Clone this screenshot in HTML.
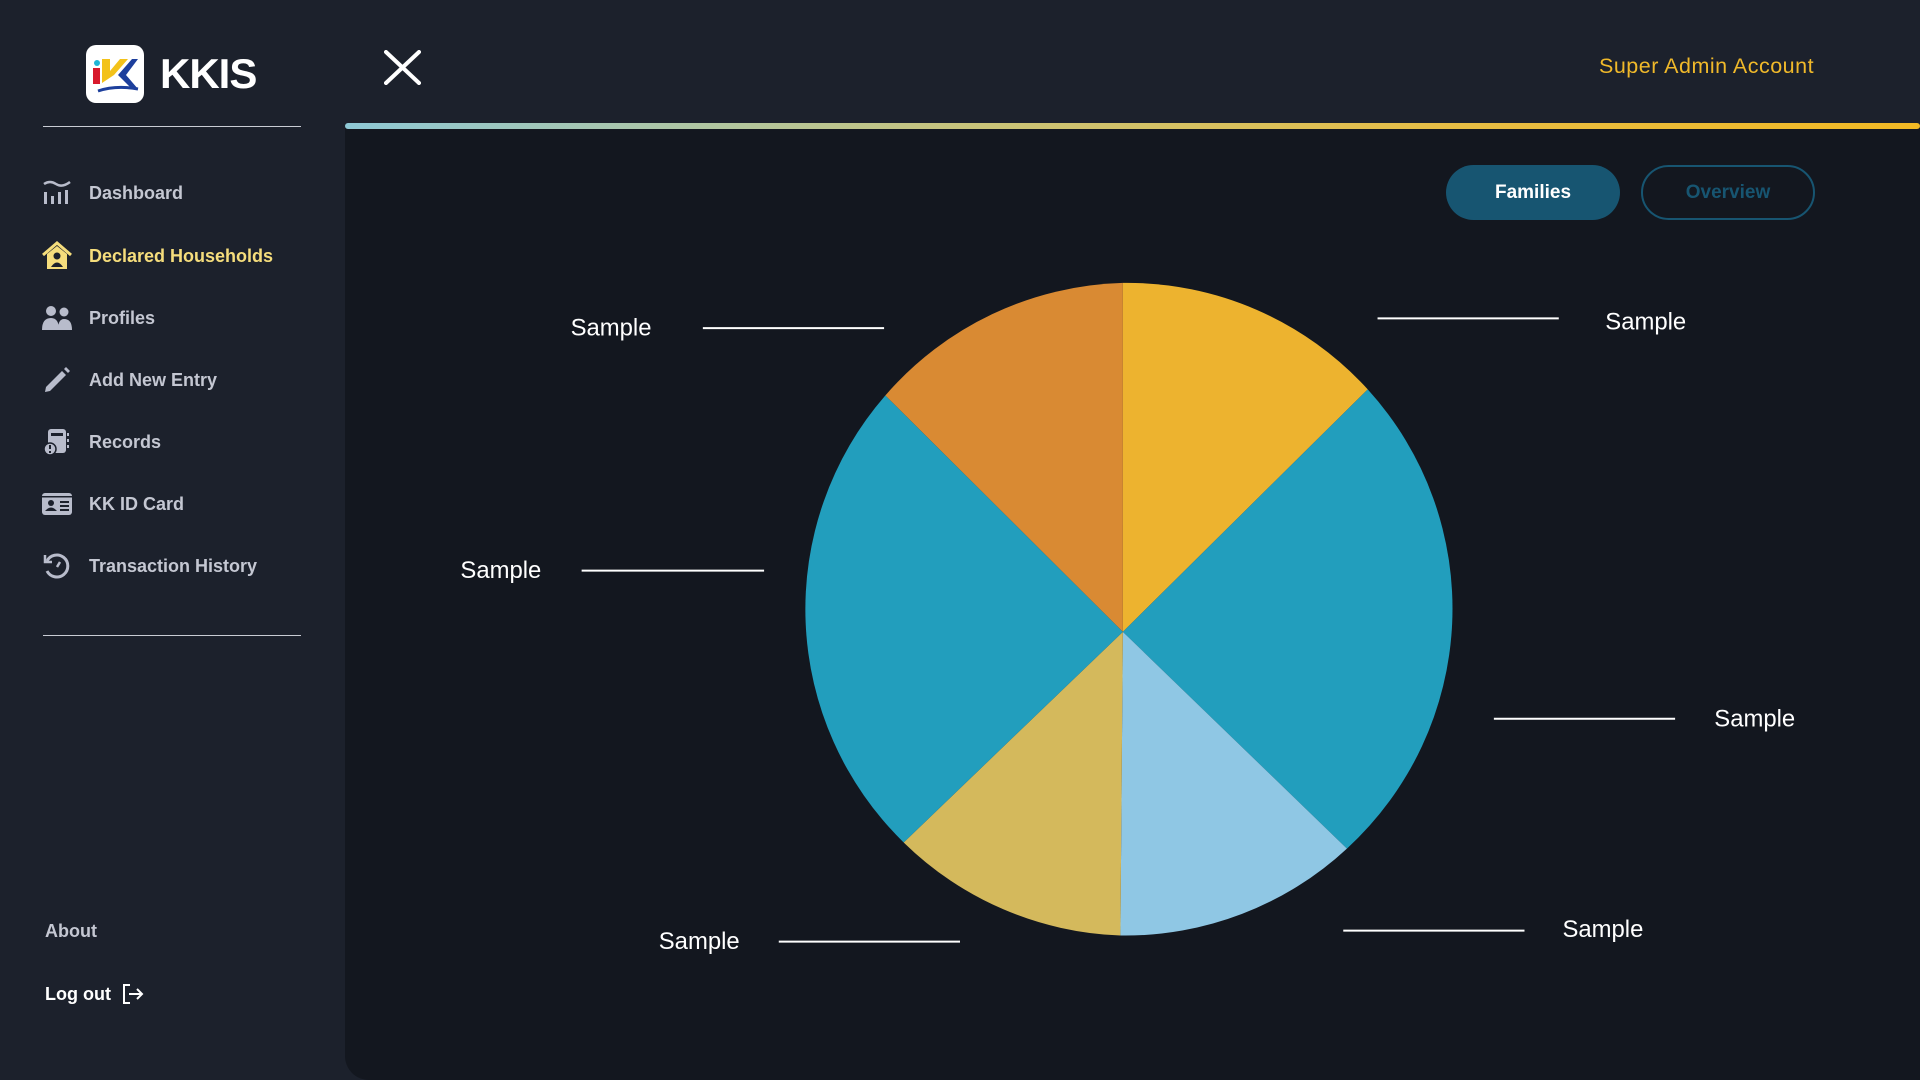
<!DOCTYPE html>
<html><head><meta charset="utf-8"><style>
*{margin:0;padding:0;box-sizing:border-box}
body{width:1920px;height:1080px;background:#1c212c;font-family:"Liberation Sans",sans-serif;position:relative;overflow:hidden}
.abs{position:absolute}
.panel{left:345px;top:124px;width:1575px;height:956px;background:#13171f;border-bottom-left-radius:24px}
.bar{left:345px;top:123px;width:1575px;height:6px;border-radius:3px;background:linear-gradient(90deg,#8ec8d6,#c9c47a 40%,#e6bd45 70%,#f2b924)}
.nav{left:42px;height:30px;display:flex;align-items:center;color:#c4c7d2;font-weight:bold;font-size:18px}
.nav svg{width:30px;height:30px;margin-right:17px}
.div{left:43px;width:258px;height:1px;background:#c9ccd4}
.btn{top:165px;height:55px;width:174px;border-radius:28px;display:flex;align-items:center;justify-content:center;font-weight:bold;font-size:19px}
</style></head><body>
<div class="abs panel"></div>
<div class="abs bar"></div>

<div class="abs" style="left:86px;top:45px;width:58px;height:58px;background:#fff;border-radius:10px">
<svg width="58" height="58" viewBox="0 0 58 58">
<circle cx="11" cy="18" r="3" fill="#1fb6d6"/>
<rect x="7" y="23" width="7" height="16" fill="#d8192c"/>
<polygon points="16,14 24,14 24,26 34,14 42,14 28,30 16,38" fill="#f3c21a"/>
<polygon points="32,30 46,14 52,14 40,30 52,44 46,44" fill="#1d3f9c"/>
<path d="M12 46 Q30 40 52 44" stroke="#1d3f9c" stroke-width="3" fill="none"/>
</svg></div>
<div class="abs" style="left:160px;top:50px;color:#fff;font-weight:bold;font-size:42px;letter-spacing:-1px">KKIS</div>
<div class="abs div" style="top:126px"></div>

<div class="abs nav" style="top:178px"><svg viewBox="0 0 30 30" fill="#b8bccb"><path d="M2 6 Q8 2 14 6 T28 4" stroke="#b8bccb" stroke-width="2.5" fill="none"/><rect x="2" y="14" width="3" height="12"/><rect x="9" y="18" width="3" height="8"/><rect x="16" y="14" width="3" height="12"/><rect x="23" y="12" width="3" height="14"/></svg>Dashboard</div>
<div class="abs nav" style="top:241px;color:#f5dd7c"><svg viewBox="0 0 30 30"><path d="M1 14 L15 2 L29 14" stroke="#f5dd7c" stroke-width="3" fill="none"/><path d="M5 13 L15 5 L25 13 V28 H5Z" fill="#f5dd7c"/><circle cx="15" cy="15" r="3.5" fill="#1c212c"/><path d="M9 26 Q15 17 21 26Z" fill="#1c212c"/></svg>Declared Households</div>
<div class="abs nav" style="top:303px"><svg viewBox="0 0 30 30" fill="#b8bccb"><circle cx="9" cy="8" r="5"/><circle cx="22" cy="9" r="4.5"/><path d="M0 27 Q0 15 9 15 Q17 15 17 27Z"/><path d="M16 27 Q16 16 22 16 Q30 16 30 27Z"/></svg>Profiles</div>
<div class="abs nav" style="top:365px"><svg viewBox="0 0 30 30" fill="#b8bccb"><path d="M4 22 L20 6 L24 10 L8 26 L3 27Z"/><path d="M22 4 L24 2 L28 6 L26 8Z"/></svg>Add New Entry</div>
<div class="abs nav" style="top:427px"><svg viewBox="0 0 30 30" fill="#b8bccb"><rect x="6" y="2" width="18" height="24" rx="3"/><rect x="9" y="6" width="12" height="3" fill="#1c212c"/><rect x="25" y="6" width="2" height="3"/><rect x="25" y="12" width="2" height="3"/><rect x="25" y="18" width="2" height="3"/><circle cx="8" cy="22" r="6" fill="#b8bccb" stroke="#1c212c" stroke-width="1.5"/><rect x="7" y="18" width="2" height="4" fill="#1c212c"/><rect x="7" y="24" width="2" height="2" fill="#1c212c"/></svg>Records</div>
<div class="abs nav" style="top:489px"><svg viewBox="0 0 30 30"><rect x="0" y="4" width="30" height="22" rx="3" fill="#b8bccb"/><rect x="0" y="7" width="30" height="1.5" fill="#1c212c"/><circle cx="9" cy="14" r="3" fill="#1c212c"/><path d="M3 22 Q9 15 15 22Z" fill="#1c212c"/><rect x="18" y="12" width="9" height="2" fill="#1c212c"/><rect x="18" y="16" width="9" height="2" fill="#1c212c"/><rect x="18" y="20" width="9" height="2" fill="#1c212c"/></svg>KK ID Card</div>
<div class="abs nav" style="top:551px"><svg viewBox="0 0 30 30" fill="none" stroke="#b8bccb" stroke-width="3"><path d="M5 10 A11 11 0 1 1 5 20"/><path d="M3 4 V11 H10" stroke-width="2.5"/><path d="M15 16 L18 11" stroke-width="2.5"/></svg>Transaction History</div>
<div class="abs div" style="top:635px"></div>

<div class="abs" style="left:45px;top:921px;color:#c4c7d2;font-weight:bold;font-size:18px">About</div>
<div class="abs" style="left:45px;top:983px;color:#fff;font-weight:bold;font-size:18px;display:flex;align-items:center">Log out<svg width="24" height="22" viewBox="0 0 24 22" style="margin-left:10px" fill="none" stroke="#fff" stroke-width="2"><path d="M9 2 H3 V20 H9"/><path d="M8 11 H21 M16 6 L21 11 L16 16"/></svg></div>

<svg class="abs" style="left:384px;top:50px" width="37" height="35" viewBox="0 0 37 35"><path d="M2 2 L35 33 M35 2 L2 33" stroke="#fff" stroke-width="4" stroke-linecap="round"/></svg>
<div class="abs" style="left:1599px;top:54px;color:#f0b92a;font-size:21.5px;letter-spacing:0.5px">Super Admin Account</div>

<div class="abs btn" style="left:1446px;background:#175571;color:#fff">Families</div>
<div class="abs btn" style="left:1641px;border:2px solid #175571;color:#175571">Overview</div>

<svg class="abs" style="left:0;top:0" width="1920" height="1080" viewBox="0 0 1568 882">
<g>
<path d="M917 516 L917 231 A266 266 0 0 0 723 323Z" fill="#d98a33"/>
<path d="M917 516 L1117 318 A266 266 0 0 0 917 231Z" fill="#edb32f"/>
<path d="M917 516 L1100 693 A266 266 0 0 0 1117 318Z" fill="#229ebd"/>
<path d="M917 516 L915 764 A266 266 0 0 0 1100 693Z" fill="#8fc7e4"/>
<path d="M917 516 L738 688 A266 266 0 0 0 915 764Z" fill="#d4b95c"/>
<path d="M917 516 L723 323 A266 266 0 0 0 738 688Z" fill="#229ebd"/>
</g>
<g stroke="#fff" stroke-width="1.6">
<line x1="574" y1="268" x2="722" y2="268"/>
<line x1="1125" y1="260" x2="1273" y2="260"/>
<line x1="475" y1="466" x2="624" y2="466"/>
<line x1="1220" y1="587" x2="1368" y2="587"/>
<line x1="1097" y1="760" x2="1245" y2="760"/>
<line x1="636" y1="769" x2="784" y2="769"/>
</g>
<g fill="#fff" font-family="Liberation Sans, sans-serif" font-size="19.5" dominant-baseline="middle">
<text x="466" y="269">Sample</text>
<text x="1311" y="264">Sample</text>
<text x="376" y="467">Sample</text>
<text x="1400" y="588">Sample</text>
<text x="1276" y="760">Sample</text>
<text x="538" y="770">Sample</text>
</g>
</svg>
</body></html>
